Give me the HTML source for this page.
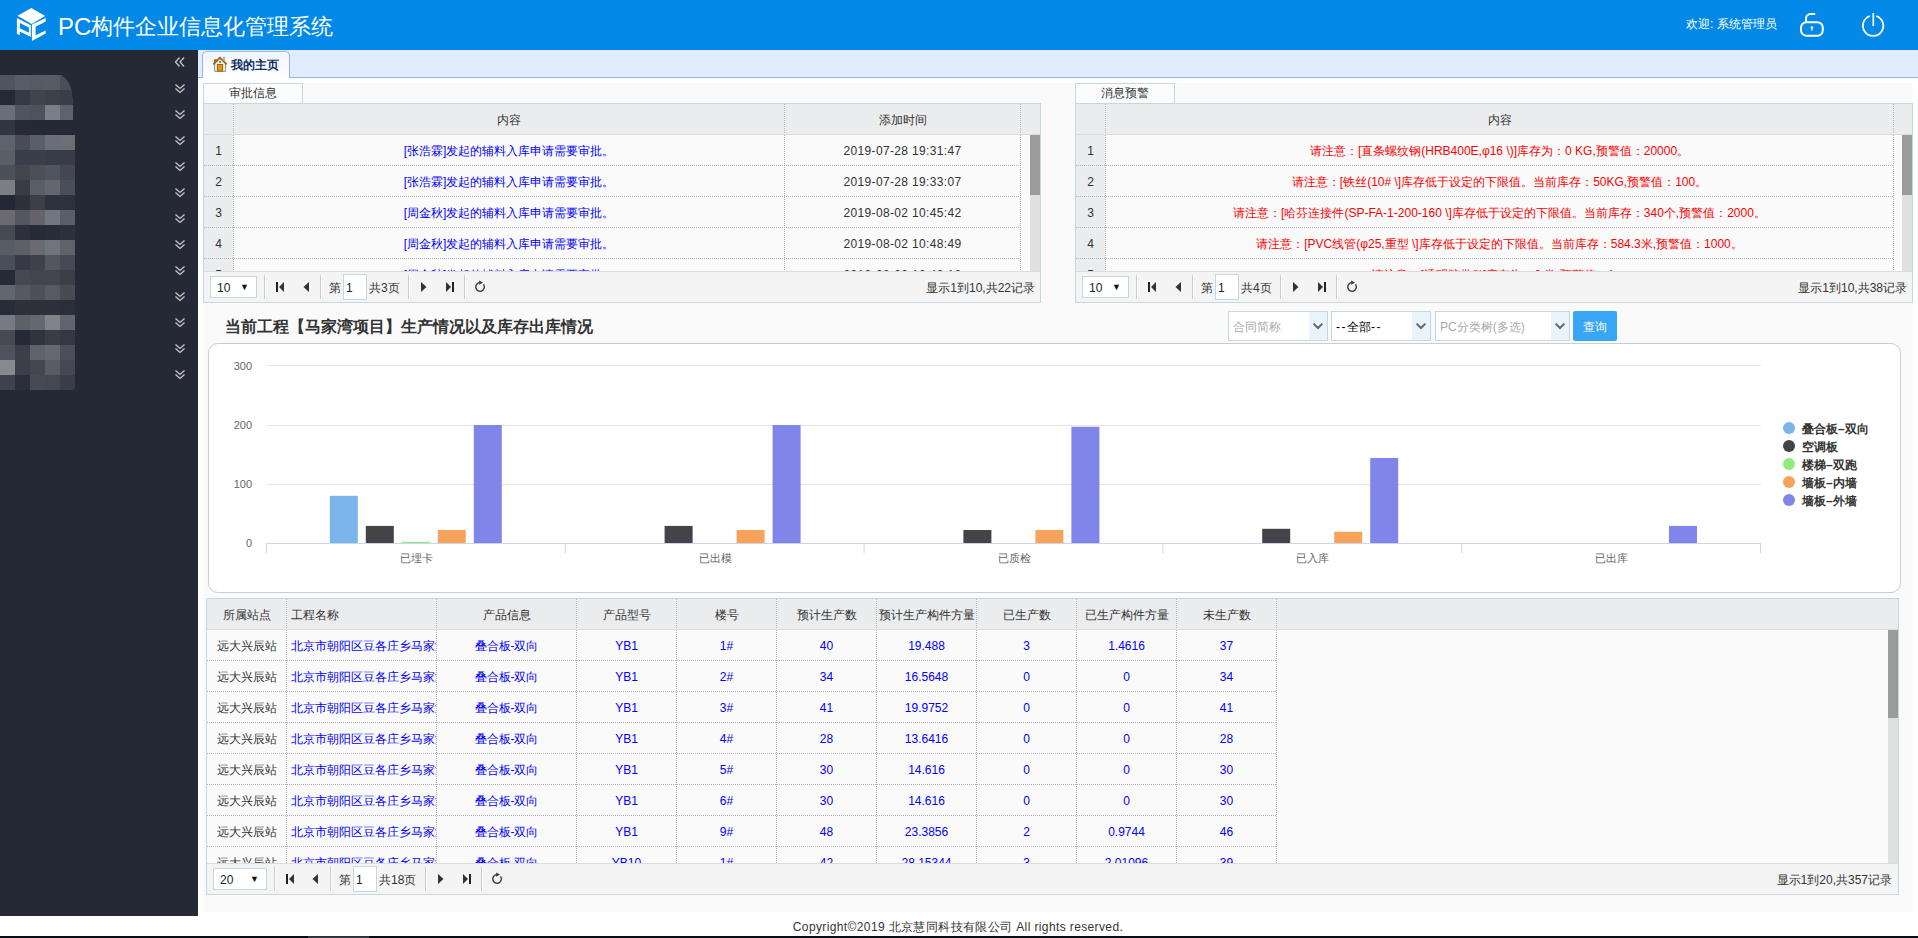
<!DOCTYPE html><html><head><meta charset="utf-8"><title>PC构件企业信息化管理系统</title><style>
*{box-sizing:border-box}
html,body{margin:0;padding:0}
body{width:1918px;height:938px;overflow:hidden;position:relative;background:#fff;font-family:"Liberation Sans", sans-serif;font-size:12px;color:#333}
.a{position:absolute}
.t{position:absolute;white-space:nowrap;line-height:14px}
.c{text-align:center}
</style></head><body>
<div class="a" style="left:0;top:0;width:1918px;height:50px;background:#0289e8"></div>
<svg class="a" style="left:10px;top:0" width="50" height="50" viewBox="10 0 50 50">
<path fill="#fff" d="M31.3,8 L45.2,15.9 L31.6,23.9 L17.5,15.7 Z"/>
<path fill="#fff" fill-rule="evenodd" d="M16.9,17.9 L30.8,25.2 L30.8,37 L19.8,31.4 L19.8,35.2 L16.9,33.8 Z M19.9,22.9 L28.9,27.5 L28.9,32.8 L19.9,28.3 Z"/>
<path fill="#fff" d="M31.9,24.5 L45.7,17.9 L45.7,21.6 L35.6,26.7 L35.6,35.2 L45.7,30.4 L45.7,33.6 L31.9,41 Z"/>
</svg>
<div class="t" style="left:58px;top:13px;font-size:22px;line-height:26px;color:#fff"><span style="font-size:24px;letter-spacing:0px;position:relative;top:1px">PC</span>构件企业信息化管理系统</div>
<div class="t" style="left:1686px;top:17px;color:#fff">欢迎: 系统管理员</div>
<svg class="a" style="left:1796px;top:10px" width="32" height="30" viewBox="1796 10 32 30">
<rect x="1801" y="22.2" width="21.8" height="13.5" rx="5.5" fill="none" stroke="#fff" stroke-width="2"/>
<path d="M1806,22.2 V18.6 a4.6,4.6 0 0 1 4.6,-4.6 H1815.2" fill="none" stroke="#fff" stroke-width="2"/>
<circle cx="1811.9" cy="27.6" r="1.3" fill="#fff"/><rect x="1811.3" y="27.6" width="1.2" height="3.4" fill="#fff" opacity="0.8"/>
</svg>
<svg class="a" style="left:1858px;top:10px" width="30" height="30" viewBox="1858 10 30 30">
<path d="M1870,16 A10.2,10.2 0 1 0 1876.2,16" fill="none" stroke="#fff" stroke-width="1.8"/>
<line x1="1873.3" y1="13" x2="1873.3" y2="26.1" stroke="#fff" stroke-width="1.7"/>
</svg>
<div class="a" style="left:0;top:50px;width:198px;height:866px;background:#242935"></div>
<svg class="a" style="left:170px;top:50px" width="20" height="340" viewBox="170 50 20 340"><path d="M179.5,57.5 L175.5,62 L179.5,66.5 M184,57.5 L180,62 L184,66.5" fill="none" stroke="#c8c8c8" stroke-width="1.3"/><path d="M175.5,84.5 L180,88.5 L184.5,84.5 M175.5,88.5 L180,92.5 L184.5,88.5" fill="none" stroke="#c8c8c8" stroke-width="1.3"/><path d="M175.5,110.5 L180,114.5 L184.5,110.5 M175.5,114.5 L180,118.5 L184.5,114.5" fill="none" stroke="#c8c8c8" stroke-width="1.3"/><path d="M175.5,136.5 L180,140.5 L184.5,136.5 M175.5,140.5 L180,144.5 L184.5,140.5" fill="none" stroke="#c8c8c8" stroke-width="1.3"/><path d="M175.5,162.5 L180,166.5 L184.5,162.5 M175.5,166.5 L180,170.5 L184.5,166.5" fill="none" stroke="#c8c8c8" stroke-width="1.3"/><path d="M175.5,188.5 L180,192.5 L184.5,188.5 M175.5,192.5 L180,196.5 L184.5,192.5" fill="none" stroke="#c8c8c8" stroke-width="1.3"/><path d="M175.5,214.5 L180,218.5 L184.5,214.5 M175.5,218.5 L180,222.5 L184.5,218.5" fill="none" stroke="#c8c8c8" stroke-width="1.3"/><path d="M175.5,240.5 L180,244.5 L184.5,240.5 M175.5,244.5 L180,248.5 L184.5,244.5" fill="none" stroke="#c8c8c8" stroke-width="1.3"/><path d="M175.5,266.5 L180,270.5 L184.5,266.5 M175.5,270.5 L180,274.5 L184.5,270.5" fill="none" stroke="#c8c8c8" stroke-width="1.3"/><path d="M175.5,292.5 L180,296.5 L184.5,292.5 M175.5,296.5 L180,300.5 L184.5,296.5" fill="none" stroke="#c8c8c8" stroke-width="1.3"/><path d="M175.5,318.5 L180,322.5 L184.5,318.5 M175.5,322.5 L180,326.5 L184.5,322.5" fill="none" stroke="#c8c8c8" stroke-width="1.3"/><path d="M175.5,344.5 L180,348.5 L184.5,344.5 M175.5,348.5 L180,352.5 L184.5,348.5" fill="none" stroke="#c8c8c8" stroke-width="1.3"/><path d="M175.5,370.5 L180,374.5 L184.5,370.5 M175.5,374.5 L180,378.5 L184.5,374.5" fill="none" stroke="#c8c8c8" stroke-width="1.3"/></svg>
<div class="a" style="left:0;top:75px;width:73px;height:45px;overflow:hidden;clip-path:polygon(0 0,61px 0,66px 4px,69px 8px,71px 13px,71px 15px,72px 15px,72px 22px,73px 22px,73px 45px,0 45px)">
<div class="a" style="left:0px;top:0px;width:15px;height:15px;background:#50545e"></div>
<div class="a" style="left:15px;top:0px;width:15px;height:15px;background:#585c66"></div>
<div class="a" style="left:30px;top:0px;width:15px;height:15px;background:#565a64"></div>
<div class="a" style="left:45px;top:0px;width:15px;height:15px;background:#575b65"></div>
<div class="a" style="left:60px;top:0px;width:13px;height:15px;background:#4a4e58"></div>
<div class="a" style="left:0px;top:15px;width:15px;height:15px;background:#262a36"></div>
<div class="a" style="left:15px;top:15px;width:15px;height:15px;background:#363a46"></div>
<div class="a" style="left:30px;top:15px;width:15px;height:15px;background:#40444e"></div>
<div class="a" style="left:45px;top:15px;width:15px;height:15px;background:#3c404a"></div>
<div class="a" style="left:60px;top:15px;width:13px;height:15px;background:#3a3e48"></div>
<div class="a" style="left:0px;top:30px;width:15px;height:15px;background:#6a6e78"></div>
<div class="a" style="left:15px;top:30px;width:15px;height:15px;background:#50545e"></div>
<div class="a" style="left:30px;top:30px;width:15px;height:15px;background:#4e525c"></div>
<div class="a" style="left:45px;top:30px;width:15px;height:15px;background:#7a7e88"></div>
<div class="a" style="left:60px;top:30px;width:13px;height:15px;background:#5e626c"></div>
</div>
<div class="a" style="left:0;top:120px;width:75px;height:270px;border-bottom-right-radius:3px;overflow:hidden">
<div class="a" style="left:0px;top:0px;width:15px;height:15px;background:#323644"></div>
<div class="a" style="left:15px;top:0px;width:15px;height:15px;background:#262a36"></div>
<div class="a" style="left:30px;top:0px;width:15px;height:15px;background:#242935"></div>
<div class="a" style="left:45px;top:0px;width:15px;height:15px;background:#242935"></div>
<div class="a" style="left:60px;top:0px;width:15px;height:15px;background:#242935"></div>
<div class="a" style="left:0px;top:15px;width:15px;height:15px;background:#5e626c"></div>
<div class="a" style="left:15px;top:15px;width:15px;height:15px;background:#4a4b55"></div>
<div class="a" style="left:30px;top:15px;width:15px;height:15px;background:#5a5e68"></div>
<div class="a" style="left:45px;top:15px;width:15px;height:15px;background:#6a6e78"></div>
<div class="a" style="left:60px;top:15px;width:15px;height:15px;background:#6c7074"></div>
<div class="a" style="left:0px;top:30px;width:15px;height:15px;background:#5a5e68"></div>
<div class="a" style="left:15px;top:30px;width:15px;height:15px;background:#3a3e4a"></div>
<div class="a" style="left:30px;top:30px;width:15px;height:15px;background:#3a3e4a"></div>
<div class="a" style="left:45px;top:30px;width:15px;height:15px;background:#383c48"></div>
<div class="a" style="left:60px;top:30px;width:15px;height:15px;background:#383c48"></div>
<div class="a" style="left:0px;top:45px;width:15px;height:15px;background:#4c505a"></div>
<div class="a" style="left:15px;top:45px;width:15px;height:15px;background:#44464f"></div>
<div class="a" style="left:30px;top:45px;width:15px;height:15px;background:#4e4e56"></div>
<div class="a" style="left:45px;top:45px;width:15px;height:15px;background:#50545e"></div>
<div class="a" style="left:60px;top:45px;width:15px;height:15px;background:#45464f"></div>
<div class="a" style="left:0px;top:60px;width:15px;height:15px;background:#7d7e84"></div>
<div class="a" style="left:15px;top:60px;width:15px;height:15px;background:#393c47"></div>
<div class="a" style="left:30px;top:60px;width:15px;height:15px;background:#5a5e68"></div>
<div class="a" style="left:45px;top:60px;width:15px;height:15px;background:#626670"></div>
<div class="a" style="left:60px;top:60px;width:15px;height:15px;background:#4a4e58"></div>
<div class="a" style="left:0px;top:75px;width:15px;height:15px;background:#242836"></div>
<div class="a" style="left:15px;top:75px;width:15px;height:15px;background:#2e313c"></div>
<div class="a" style="left:30px;top:75px;width:15px;height:15px;background:#3c3e4a"></div>
<div class="a" style="left:45px;top:75px;width:15px;height:15px;background:#2e323e"></div>
<div class="a" style="left:60px;top:75px;width:15px;height:15px;background:#2e323e"></div>
<div class="a" style="left:0px;top:90px;width:15px;height:15px;background:#6c6a70"></div>
<div class="a" style="left:15px;top:90px;width:15px;height:15px;background:#555660"></div>
<div class="a" style="left:30px;top:90px;width:15px;height:15px;background:#66646a"></div>
<div class="a" style="left:45px;top:90px;width:15px;height:15px;background:#727680"></div>
<div class="a" style="left:60px;top:90px;width:15px;height:15px;background:#5a5e68"></div>
<div class="a" style="left:0px;top:105px;width:15px;height:15px;background:#464a54"></div>
<div class="a" style="left:15px;top:105px;width:15px;height:15px;background:#2c303c"></div>
<div class="a" style="left:30px;top:105px;width:15px;height:15px;background:#262a36"></div>
<div class="a" style="left:45px;top:105px;width:15px;height:15px;background:#282c38"></div>
<div class="a" style="left:60px;top:105px;width:15px;height:15px;background:#2c303a"></div>
<div class="a" style="left:0px;top:120px;width:15px;height:15px;background:#585c66"></div>
<div class="a" style="left:15px;top:120px;width:15px;height:15px;background:#5e6068"></div>
<div class="a" style="left:30px;top:120px;width:15px;height:15px;background:#6a6a70"></div>
<div class="a" style="left:45px;top:120px;width:15px;height:15px;background:#70747c"></div>
<div class="a" style="left:60px;top:120px;width:15px;height:15px;background:#60626a"></div>
<div class="a" style="left:0px;top:135px;width:15px;height:15px;background:#4a4e58"></div>
<div class="a" style="left:15px;top:135px;width:15px;height:15px;background:#363a46"></div>
<div class="a" style="left:30px;top:135px;width:15px;height:15px;background:#3e404a"></div>
<div class="a" style="left:45px;top:135px;width:15px;height:15px;background:#52565e"></div>
<div class="a" style="left:60px;top:135px;width:15px;height:15px;background:#474a54"></div>
<div class="a" style="left:0px;top:150px;width:15px;height:15px;background:#262a36"></div>
<div class="a" style="left:15px;top:150px;width:15px;height:15px;background:#454852"></div>
<div class="a" style="left:30px;top:150px;width:15px;height:15px;background:#42454f"></div>
<div class="a" style="left:45px;top:150px;width:15px;height:15px;background:#42454f"></div>
<div class="a" style="left:60px;top:150px;width:15px;height:15px;background:#3c3e48"></div>
<div class="a" style="left:0px;top:165px;width:15px;height:15px;background:#62666e"></div>
<div class="a" style="left:15px;top:165px;width:15px;height:15px;background:#555a62"></div>
<div class="a" style="left:30px;top:165px;width:15px;height:15px;background:#4e5058"></div>
<div class="a" style="left:45px;top:165px;width:15px;height:15px;background:#565a64"></div>
<div class="a" style="left:60px;top:165px;width:15px;height:15px;background:#4a4a52"></div>
<div class="a" style="left:0px;top:180px;width:15px;height:15px;background:#282c38"></div>
<div class="a" style="left:15px;top:180px;width:15px;height:15px;background:#2e303c"></div>
<div class="a" style="left:30px;top:180px;width:15px;height:15px;background:#2e303c"></div>
<div class="a" style="left:45px;top:180px;width:15px;height:15px;background:#2e303c"></div>
<div class="a" style="left:60px;top:180px;width:15px;height:15px;background:#2a2e3a"></div>
<div class="a" style="left:0px;top:195px;width:15px;height:15px;background:#767a82"></div>
<div class="a" style="left:15px;top:195px;width:15px;height:15px;background:#5c6068"></div>
<div class="a" style="left:30px;top:195px;width:15px;height:15px;background:#646870"></div>
<div class="a" style="left:45px;top:195px;width:15px;height:15px;background:#80848a"></div>
<div class="a" style="left:60px;top:195px;width:15px;height:15px;background:#60646c"></div>
<div class="a" style="left:0px;top:210px;width:15px;height:15px;background:#474a54"></div>
<div class="a" style="left:15px;top:210px;width:15px;height:15px;background:#262a36"></div>
<div class="a" style="left:30px;top:210px;width:15px;height:15px;background:#30343e"></div>
<div class="a" style="left:45px;top:210px;width:15px;height:15px;background:#3a3c48"></div>
<div class="a" style="left:60px;top:210px;width:15px;height:15px;background:#353742"></div>
<div class="a" style="left:0px;top:225px;width:15px;height:15px;background:#4e525c"></div>
<div class="a" style="left:15px;top:225px;width:15px;height:15px;background:#3c3e48"></div>
<div class="a" style="left:30px;top:225px;width:15px;height:15px;background:#5e626c"></div>
<div class="a" style="left:45px;top:225px;width:15px;height:15px;background:#646871"></div>
<div class="a" style="left:60px;top:225px;width:15px;height:15px;background:#4c4f59"></div>
<div class="a" style="left:0px;top:240px;width:15px;height:15px;background:#88898e"></div>
<div class="a" style="left:15px;top:240px;width:15px;height:15px;background:#3c3e4a"></div>
<div class="a" style="left:30px;top:240px;width:15px;height:15px;background:#47464f"></div>
<div class="a" style="left:45px;top:240px;width:15px;height:15px;background:#585c66"></div>
<div class="a" style="left:60px;top:240px;width:15px;height:15px;background:#454852"></div>
<div class="a" style="left:0px;top:255px;width:15px;height:15px;background:#3e424c"></div>
<div class="a" style="left:15px;top:255px;width:15px;height:15px;background:#2a2e3a"></div>
<div class="a" style="left:30px;top:255px;width:15px;height:15px;background:#464a54"></div>
<div class="a" style="left:45px;top:255px;width:15px;height:15px;background:#444852"></div>
<div class="a" style="left:60px;top:255px;width:15px;height:15px;background:#3a3e48"></div>
</div>
<div class="a" style="left:198px;top:50px;width:1720px;height:28px;background:#e0ecff;border-bottom:1px solid #95b8e7"></div>
<div class="a" style="left:202px;top:51px;width:88px;height:27px;border:1px solid #95b8e7;border-bottom:0;border-radius:5px 5px 0 0;background:linear-gradient(#eff5ff,#ffffff)"></div>
<svg class="a" style="left:210px;top:54px" width="20" height="20" viewBox="210 54 20 20">
<path d="M214.6,63.6 V71.4 H225.6 V63.6 L220,58.3 Z" fill="#e6f2dc" stroke="#8a8a8a" stroke-width="0.9"/>
<path d="M213.3,64.4 L220,57.6 L226.7,64.4" fill="none" stroke="#b05a00" stroke-width="1.6"/>
<path d="M213.8,63 L214.3,59.2 L217.8,59.2 Z" fill="#b05a00"/>
<rect x="223.3" y="57.2" width="1.5" height="3.2" fill="#f4f0d8" stroke="#999" stroke-width="0.7"/>
<rect x="217.4" y="64.5" width="5.2" height="6.6" fill="#dc961e" stroke="#b06000" stroke-width="1"/>
<rect x="219.3" y="61.2" width="1.6" height="1.6" fill="#1a47b8"/>
</svg>
<div class="t" style="left:231px;top:58px;font-weight:bold;color:#0e2d5f">我的主页</div>
<div class="a" style="left:203px;top:83px;width:1710px;height:829px;background:#fafafa"></div>
<div class="a" style="left:203px;top:83px;width:100px;height:21px;border:1px solid #c4d8df;border-bottom:0;background:#fcfcfc"></div><div class="t c" style="left:203px;top:86px;width:100px;color:#333">审批信息</div><div class="a" style="left:203px;top:103px;width:838px;height:200px;border:1px solid #c4d8df;background:#fafafa"></div><div class="a" style="left:204px;top:104px;width:836px;height:31px;background:#ebeced;border-bottom:1px solid #dcdcdc"></div><div class="a" style="left:233px;top:104px;width:1px;height:30px;background:repeating-linear-gradient(to bottom,#b4b4b4 0 1px,transparent 1px 2px)"></div><div class="a" style="left:784px;top:104px;width:1px;height:30px;background:repeating-linear-gradient(to bottom,#b4b4b4 0 1px,transparent 1px 2px)"></div><div class="a" style="left:1020px;top:104px;width:1px;height:30px;background:repeating-linear-gradient(to bottom,#b4b4b4 0 1px,transparent 1px 2px)"></div><div class="t c" style="left:234px;top:113px;width:550px;color:#333">内容</div><div class="t c" style="left:785px;top:113px;width:235px;color:#333">添加时间</div><div class="a" style="left:204px;top:135px;width:836px;height:136px;overflow:hidden"><div class="a" style="left:0;top:0;width:29px;height:136px;background:#ebeced"></div><div class="a" style="left:29px;top:0px;width:1px;height:136px;background:repeating-linear-gradient(to bottom,#b4b4b4 0 1px,transparent 1px 2px)"></div><div class="a" style="left:580px;top:0px;width:1px;height:136px;background:repeating-linear-gradient(to bottom,#b4b4b4 0 1px,transparent 1px 2px)"></div><div class="a" style="left:816px;top:0px;width:1px;height:136px;background:repeating-linear-gradient(to bottom,#b4b4b4 0 1px,transparent 1px 2px)"></div><div class="a" style="left:0px;top:30px;width:816px;height:1px;background:repeating-linear-gradient(to right,#b4b4b4 0 1px,transparent 1px 2px)"></div><div class="t c" style="left:0;top:9px;width:29px;color:#333">1</div><div class="t c" style="left:30px;top:9px;width:550px;color:#0000ff">[张浩霖]发起的辅料入库申请需要审批。</div><div class="t c" style="left:581px;top:9px;width:235px;color:#333"><span style="letter-spacing:0.35px">2019-07-28 19:31:47</span></div><div class="a" style="left:0px;top:61px;width:816px;height:1px;background:repeating-linear-gradient(to right,#b4b4b4 0 1px,transparent 1px 2px)"></div><div class="t c" style="left:0;top:40px;width:29px;color:#333">2</div><div class="t c" style="left:30px;top:40px;width:550px;color:#0000ff">[张浩霖]发起的辅料入库申请需要审批。</div><div class="t c" style="left:581px;top:40px;width:235px;color:#333"><span style="letter-spacing:0.35px">2019-07-28 19:33:07</span></div><div class="a" style="left:0px;top:92px;width:816px;height:1px;background:repeating-linear-gradient(to right,#b4b4b4 0 1px,transparent 1px 2px)"></div><div class="t c" style="left:0;top:71px;width:29px;color:#333">3</div><div class="t c" style="left:30px;top:71px;width:550px;color:#0000ff">[周金秋]发起的辅料入库申请需要审批。</div><div class="t c" style="left:581px;top:71px;width:235px;color:#333"><span style="letter-spacing:0.35px">2019-08-02 10:45:42</span></div><div class="a" style="left:0px;top:123px;width:816px;height:1px;background:repeating-linear-gradient(to right,#b4b4b4 0 1px,transparent 1px 2px)"></div><div class="t c" style="left:0;top:102px;width:29px;color:#333">4</div><div class="t c" style="left:30px;top:102px;width:550px;color:#0000ff">[周金秋]发起的辅料入库申请需要审批。</div><div class="t c" style="left:581px;top:102px;width:235px;color:#333"><span style="letter-spacing:0.35px">2019-08-02 10:48:49</span></div><div class="a" style="left:0px;top:154px;width:816px;height:1px;background:repeating-linear-gradient(to right,#b4b4b4 0 1px,transparent 1px 2px)"></div><div class="t c" style="left:0;top:133px;width:29px;color:#333">5</div><div class="t c" style="left:30px;top:133px;width:550px;color:#0000ff">[周金秋]发起的辅料入库申请需要审批。</div><div class="t c" style="left:581px;top:133px;width:235px;color:#333"><span style="letter-spacing:0.35px">2019-08-02 10:49:12</span></div><div class="a" style="left:826px;top:0;width:10px;height:136px;background:#e0e0e0"></div><div class="a" style="left:826px;top:0;width:10px;height:60px;background:#9b9b9b"></div></div><div class="a" style="left:204px;top:271px;width:836px;height:31px;background:#f4f4f4;border-top:1px solid #dcdcdc"></div><div class="a" style="left:210px;top:276px;width:47px;height:22px;border:1px solid #c4d8df;background:#fff"></div><div class="t" style="left:217px;top:281px;color:#222">10</div><div class="t" style="left:240px;top:280px;color:#111;font-size:9px">▼</div><div class="a" style="left:264px;top:275px;width:2px;height:24px;border-left:1px solid #ccc;border-right:1px solid #fff"></div><div class="a" style="left:320px;top:275px;width:2px;height:24px;border-left:1px solid #ccc;border-right:1px solid #fff"></div><div class="a" style="left:408px;top:275px;width:2px;height:24px;border-left:1px solid #ccc;border-right:1px solid #fff"></div><div class="a" style="left:464px;top:275px;width:2px;height:24px;border-left:1px solid #ccc;border-right:1px solid #fff"></div><svg class="a" style="left:275px;top:281px" width="10" height="12" viewBox="0 0 10 12"><rect x="1" y="1" width="2" height="10" fill="#222"/><path d="M9,1 L4,6 L9,11 Z" fill="#333"/></svg><svg class="a" style="left:302px;top:281px" width="8" height="12" viewBox="0 0 8 12"><path d="M7,1 L1.5,6 L7,11 Z" fill="#333"/></svg><div class="t" style="left:329px;top:281px;color:#333">第</div><div class="a" style="left:343px;top:274px;width:24px;height:26px;border:1px solid #c4d8df;background:#fff"></div><div class="t" style="left:346px;top:281px;color:#222">1</div><div class="t" style="left:369px;top:281px;color:#333">共3页</div><svg class="a" style="left:420px;top:281px" width="8" height="12" viewBox="0 0 8 12"><path d="M1,1 L6.5,6 L1,11 Z" fill="#333"/></svg><svg class="a" style="left:445px;top:281px" width="10" height="12" viewBox="0 0 10 12"><rect x="7" y="1" width="2" height="10" fill="#222"/><path d="M1,1 L6,6 L1,11 Z" fill="#333"/></svg><svg class="a" style="left:474px;top:280px" width="12" height="13" viewBox="0 0 12 13"><path d="M9.5,4.3 A4.3,4.3 0 1 1 5.8,2.6" fill="none" stroke="#3a3a3a" stroke-width="1.4"/><path d="M5.1,0.5 L8.9,2.5 L5.3,4.8 Z" fill="#3a3a3a"/></svg><div class="t" style="left:735px;width:300px;text-align:right;top:281px;color:#333">显示1到10,共22记录</div>
<div class="a" style="left:1075px;top:83px;width:100px;height:21px;border:1px solid #c4d8df;border-bottom:0;background:#fcfcfc"></div><div class="t c" style="left:1075px;top:86px;width:100px;color:#333">消息预警</div><div class="a" style="left:1075px;top:103px;width:838px;height:200px;border:1px solid #c4d8df;background:#fafafa"></div><div class="a" style="left:1076px;top:104px;width:836px;height:31px;background:#ebeced;border-bottom:1px solid #dcdcdc"></div><div class="a" style="left:1105px;top:104px;width:1px;height:30px;background:repeating-linear-gradient(to bottom,#b4b4b4 0 1px,transparent 1px 2px)"></div><div class="a" style="left:1893px;top:104px;width:1px;height:30px;background:repeating-linear-gradient(to bottom,#b4b4b4 0 1px,transparent 1px 2px)"></div><div class="t c" style="left:1106px;top:113px;width:787px;color:#333">内容</div><div class="a" style="left:1076px;top:135px;width:836px;height:136px;overflow:hidden"><div class="a" style="left:0;top:0;width:29px;height:136px;background:#ebeced"></div><div class="a" style="left:29px;top:0px;width:1px;height:136px;background:repeating-linear-gradient(to bottom,#b4b4b4 0 1px,transparent 1px 2px)"></div><div class="a" style="left:817px;top:0px;width:1px;height:136px;background:repeating-linear-gradient(to bottom,#b4b4b4 0 1px,transparent 1px 2px)"></div><div class="a" style="left:0px;top:30px;width:817px;height:1px;background:repeating-linear-gradient(to right,#b4b4b4 0 1px,transparent 1px 2px)"></div><div class="t c" style="left:0;top:9px;width:29px;color:#333">1</div><div class="t c" style="left:30px;top:9px;width:787px;color:#ff0000">请注意：[直条螺纹钢(HRB400E,φ16 \)]库存为：0 KG,预警值：20000。</div><div class="a" style="left:0px;top:61px;width:817px;height:1px;background:repeating-linear-gradient(to right,#b4b4b4 0 1px,transparent 1px 2px)"></div><div class="t c" style="left:0;top:40px;width:29px;color:#333">2</div><div class="t c" style="left:30px;top:40px;width:787px;color:#ff0000">请注意：[铁丝(10# \]库存低于设定的下限值。当前库存：50KG,预警值：100。</div><div class="a" style="left:0px;top:92px;width:817px;height:1px;background:repeating-linear-gradient(to right,#b4b4b4 0 1px,transparent 1px 2px)"></div><div class="t c" style="left:0;top:71px;width:29px;color:#333">3</div><div class="t c" style="left:30px;top:71px;width:787px;color:#ff0000">请注意：[哈芬连接件(SP-FA-1-200-160 \]库存低于设定的下限值。当前库存：340个,预警值：2000。</div><div class="a" style="left:0px;top:123px;width:817px;height:1px;background:repeating-linear-gradient(to right,#b4b4b4 0 1px,transparent 1px 2px)"></div><div class="t c" style="left:0;top:102px;width:29px;color:#333">4</div><div class="t c" style="left:30px;top:102px;width:787px;color:#ff0000">请注意：[PVC线管(φ25,重型 \]库存低于设定的下限值。当前库存：584.3米,预警值：1000。</div><div class="a" style="left:0px;top:154px;width:817px;height:1px;background:repeating-linear-gradient(to right,#b4b4b4 0 1px,transparent 1px 2px)"></div><div class="t c" style="left:0;top:133px;width:29px;color:#333">5</div><div class="t c" style="left:30px;top:133px;width:787px;color:#ff0000">请注意：[透明胶带(\)]库存为：0 卷,预警值：1。</div><div class="a" style="left:826px;top:0;width:10px;height:136px;background:#e0e0e0"></div><div class="a" style="left:826px;top:0;width:10px;height:60px;background:#9b9b9b"></div></div><div class="a" style="left:1076px;top:271px;width:836px;height:31px;background:#f4f4f4;border-top:1px solid #dcdcdc"></div><div class="a" style="left:1082px;top:276px;width:47px;height:22px;border:1px solid #c4d8df;background:#fff"></div><div class="t" style="left:1089px;top:281px;color:#222">10</div><div class="t" style="left:1112px;top:280px;color:#111;font-size:9px">▼</div><div class="a" style="left:1136px;top:275px;width:2px;height:24px;border-left:1px solid #ccc;border-right:1px solid #fff"></div><div class="a" style="left:1192px;top:275px;width:2px;height:24px;border-left:1px solid #ccc;border-right:1px solid #fff"></div><div class="a" style="left:1280px;top:275px;width:2px;height:24px;border-left:1px solid #ccc;border-right:1px solid #fff"></div><div class="a" style="left:1336px;top:275px;width:2px;height:24px;border-left:1px solid #ccc;border-right:1px solid #fff"></div><svg class="a" style="left:1147px;top:281px" width="10" height="12" viewBox="0 0 10 12"><rect x="1" y="1" width="2" height="10" fill="#222"/><path d="M9,1 L4,6 L9,11 Z" fill="#333"/></svg><svg class="a" style="left:1174px;top:281px" width="8" height="12" viewBox="0 0 8 12"><path d="M7,1 L1.5,6 L7,11 Z" fill="#333"/></svg><div class="t" style="left:1201px;top:281px;color:#333">第</div><div class="a" style="left:1215px;top:274px;width:24px;height:26px;border:1px solid #c4d8df;background:#fff"></div><div class="t" style="left:1218px;top:281px;color:#222">1</div><div class="t" style="left:1241px;top:281px;color:#333">共4页</div><svg class="a" style="left:1292px;top:281px" width="8" height="12" viewBox="0 0 8 12"><path d="M1,1 L6.5,6 L1,11 Z" fill="#333"/></svg><svg class="a" style="left:1317px;top:281px" width="10" height="12" viewBox="0 0 10 12"><rect x="7" y="1" width="2" height="10" fill="#222"/><path d="M1,1 L6,6 L1,11 Z" fill="#333"/></svg><svg class="a" style="left:1346px;top:280px" width="12" height="13" viewBox="0 0 12 13"><path d="M9.5,4.3 A4.3,4.3 0 1 1 5.8,2.6" fill="none" stroke="#3a3a3a" stroke-width="1.4"/><path d="M5.1,0.5 L8.9,2.5 L5.3,4.8 Z" fill="#3a3a3a"/></svg><div class="t" style="left:1607px;width:300px;text-align:right;top:281px;color:#333">显示1到10,共38记录</div>
<div class="t" style="left:225px;top:318px;font-size:16px;line-height:18px;font-weight:bold;color:#333">当前工程【马家湾项目】生产情况以及库存出库情况</div>
<div class="a" style="left:1228px;top:311px;width:100px;height:30px;border:1px solid #c4d8df;background:#fff"></div><div class="a" style="left:1309px;top:312px;width:18px;height:28px;background:#e8f4fa"></div><svg class="a" style="left:1312px;top:320px" width="12" height="12" viewBox="0 0 12 12"><path d="M1.6,3.6 L6,8 L10.4,3.6" fill="none" stroke="#666" stroke-width="2"/></svg><div class="t" style="left:1233px;top:320px;color:#aaa">合同简称</div>
<div class="a" style="left:1331px;top:311px;width:100px;height:30px;border:1px solid #c4d8df;background:#fff"></div><div class="a" style="left:1412px;top:312px;width:18px;height:28px;background:#e8f4fa"></div><svg class="a" style="left:1415px;top:320px" width="12" height="12" viewBox="0 0 12 12"><path d="M1.6,3.6 L6,8 L10.4,3.6" fill="none" stroke="#666" stroke-width="2"/></svg><div class="t" style="left:1336px;top:320px;color:#000"><span style="letter-spacing:1.5px">--</span>全部<span style="letter-spacing:1.5px">--</span></div>
<div class="a" style="left:1435px;top:311px;width:135px;height:30px;border:1px solid #c4d8df;background:#fff"></div><div class="a" style="left:1551px;top:312px;width:18px;height:28px;background:#e8f4fa"></div><svg class="a" style="left:1554px;top:320px" width="12" height="12" viewBox="0 0 12 12"><path d="M1.6,3.6 L6,8 L10.4,3.6" fill="none" stroke="#666" stroke-width="2"/></svg><div class="t" style="left:1440px;top:320px;color:#aaa">PC分类树(多选)</div>
<div class="a" style="left:1573px;top:311px;width:44px;height:30px;background:#38a5f5;border-radius:2px"></div>
<div class="t c" style="left:1573px;top:320px;width:44px;color:#fff">查询</div>
<div class="a" style="left:208px;top:343px;width:1693px;height:250px;border:1px solid #cccccc;border-radius:10px;background:#fff"></div>
<svg class="a" style="left:208px;top:343px" width="1693" height="250" viewBox="208 343 1693 250"><line x1="267" y1="365.5" x2="1761" y2="365.5" stroke="#e6e6e6" stroke-width="1"/><line x1="267" y1="425.5" x2="1761" y2="425.5" stroke="#e6e6e6" stroke-width="1"/><line x1="267" y1="484.5" x2="1761" y2="484.5" stroke="#e6e6e6" stroke-width="1"/><line x1="267" y1="543.5" x2="1761" y2="543.5" stroke="#ccd6eb" stroke-width="1"/><line x1="266.5" y1="543" x2="266.5" y2="553" stroke="#ccd6eb" stroke-width="1"/><line x1="565.3" y1="543" x2="565.3" y2="553" stroke="#ccd6eb" stroke-width="1"/><line x1="864.1" y1="543" x2="864.1" y2="553" stroke="#ccd6eb" stroke-width="1"/><line x1="1162.9" y1="543" x2="1162.9" y2="553" stroke="#ccd6eb" stroke-width="1"/><line x1="1461.7" y1="543" x2="1461.7" y2="553" stroke="#ccd6eb" stroke-width="1"/><line x1="1760.5" y1="543" x2="1760.5" y2="553" stroke="#ccd6eb" stroke-width="1"/></svg>
<div class="t" style="left:200px;width:52px;text-align:right;top:359px;font-size:11px;color:#666">300</div>
<div class="t" style="left:200px;width:52px;text-align:right;top:418px;font-size:11px;color:#666">200</div>
<div class="t" style="left:200px;width:52px;text-align:right;top:477px;font-size:11px;color:#666">100</div>
<div class="t" style="left:200px;width:52px;text-align:right;top:536px;font-size:11px;color:#666">0</div>
<div class="t c" style="left:366.4px;width:100px;top:551px;font-size:11px;color:#666">已埋卡</div>
<div class="t c" style="left:665.2px;width:100px;top:551px;font-size:11px;color:#666">已出模</div>
<div class="t c" style="left:964.0px;width:100px;top:551px;font-size:11px;color:#666">已质检</div>
<div class="t c" style="left:1262.8px;width:100px;top:551px;font-size:11px;color:#666">已入库</div>
<div class="t c" style="left:1561.6px;width:100px;top:551px;font-size:11px;color:#666">已出库</div>
<svg class="a" style="left:208px;top:343px" width="1693" height="250" viewBox="208 343 1693 250"><rect x="329.8" y="495.8" width="28" height="47.2" fill="#7cb5ec"/><rect x="365.8" y="525.9" width="28" height="17.1" fill="#434348"/><rect x="401.8" y="541.8" width="28" height="1.2" fill="#90ed7d"/><rect x="437.8" y="530.0" width="28" height="13.0" fill="#f7a35c"/><rect x="473.8" y="425.0" width="28" height="118.0" fill="#8085e9"/><rect x="664.6" y="525.9" width="28" height="17.1" fill="#434348"/><rect x="736.6" y="530.0" width="28" height="13.0" fill="#f7a35c"/><rect x="772.6" y="425.0" width="28" height="118.0" fill="#8085e9"/><rect x="963.4" y="530.0" width="28" height="13.0" fill="#434348"/><rect x="1035.4" y="530.0" width="28" height="13.0" fill="#f7a35c"/><rect x="1071.4" y="426.8" width="28" height="116.2" fill="#8085e9"/><rect x="1262.2" y="528.8" width="28" height="14.2" fill="#434348"/><rect x="1334.2" y="531.8" width="28" height="11.2" fill="#f7a35c"/><rect x="1370.2" y="458.0" width="28" height="85.0" fill="#8085e9"/><rect x="1669.0" y="525.9" width="28" height="17.1" fill="#8085e9"/></svg>
<div class="a" style="left:1783px;top:422px;width:12px;height:12px;border-radius:6px;background:#7cb5ec"></div>
<div class="t" style="left:1802px;top:422px;font-weight:bold;color:#333">叠合板–双向</div>
<div class="a" style="left:1783px;top:440px;width:12px;height:12px;border-radius:6px;background:#434348"></div>
<div class="t" style="left:1802px;top:440px;font-weight:bold;color:#333">空调板</div>
<div class="a" style="left:1783px;top:458px;width:12px;height:12px;border-radius:6px;background:#90ed7d"></div>
<div class="t" style="left:1802px;top:458px;font-weight:bold;color:#333">楼梯–双跑</div>
<div class="a" style="left:1783px;top:476px;width:12px;height:12px;border-radius:6px;background:#f7a35c"></div>
<div class="t" style="left:1802px;top:476px;font-weight:bold;color:#333">墙板–内墙</div>
<div class="a" style="left:1783px;top:494px;width:12px;height:12px;border-radius:6px;background:#8085e9"></div>
<div class="t" style="left:1802px;top:494px;font-weight:bold;color:#333">墙板–外墙</div>
<div class="a" style="left:206px;top:598px;width:1693px;height:297px;border:1px solid #c4d8df;background:#fafafa"></div>
<div class="a" style="left:207px;top:599px;width:1691px;height:31px;background:#ebeced;border-bottom:1px solid #dcdcdc"></div>
<div class="a" style="left:286px;top:599px;width:1px;height:30px;background:repeating-linear-gradient(to bottom,#b4b4b4 0 1px,transparent 1px 2px)"></div>
<div class="a" style="left:436px;top:599px;width:1px;height:30px;background:repeating-linear-gradient(to bottom,#b4b4b4 0 1px,transparent 1px 2px)"></div>
<div class="a" style="left:576px;top:599px;width:1px;height:30px;background:repeating-linear-gradient(to bottom,#b4b4b4 0 1px,transparent 1px 2px)"></div>
<div class="a" style="left:676px;top:599px;width:1px;height:30px;background:repeating-linear-gradient(to bottom,#b4b4b4 0 1px,transparent 1px 2px)"></div>
<div class="a" style="left:776px;top:599px;width:1px;height:30px;background:repeating-linear-gradient(to bottom,#b4b4b4 0 1px,transparent 1px 2px)"></div>
<div class="a" style="left:876px;top:599px;width:1px;height:30px;background:repeating-linear-gradient(to bottom,#b4b4b4 0 1px,transparent 1px 2px)"></div>
<div class="a" style="left:976px;top:599px;width:1px;height:30px;background:repeating-linear-gradient(to bottom,#b4b4b4 0 1px,transparent 1px 2px)"></div>
<div class="a" style="left:1076px;top:599px;width:1px;height:30px;background:repeating-linear-gradient(to bottom,#b4b4b4 0 1px,transparent 1px 2px)"></div>
<div class="a" style="left:1176px;top:599px;width:1px;height:30px;background:repeating-linear-gradient(to bottom,#b4b4b4 0 1px,transparent 1px 2px)"></div>
<div class="a" style="left:1276px;top:599px;width:1px;height:30px;background:repeating-linear-gradient(to bottom,#b4b4b4 0 1px,transparent 1px 2px)"></div>
<div class="t c" style="left:207px;top:608px;width:79px;color:#333">所属站点</div>
<div class="t" style="left:291px;top:608px;color:#333">工程名称</div>
<div class="t c" style="left:437px;top:608px;width:139px;color:#333">产品信息</div>
<div class="t c" style="left:577px;top:608px;width:99px;color:#333">产品型号</div>
<div class="t c" style="left:677px;top:608px;width:99px;color:#333">楼号</div>
<div class="t c" style="left:777px;top:608px;width:99px;color:#333">预计生产数</div>
<div class="t c" style="left:877px;top:608px;width:99px;color:#333">预计生产构件方量</div>
<div class="t c" style="left:977px;top:608px;width:99px;color:#333">已生产数</div>
<div class="t c" style="left:1077px;top:608px;width:99px;color:#333">已生产构件方量</div>
<div class="t c" style="left:1177px;top:608px;width:99px;color:#333">未生产数</div>
<div class="a" style="left:207px;top:630px;width:1691px;height:233px;overflow:hidden">
<div class="a" style="left:79px;top:0px;width:1px;height:233px;background:repeating-linear-gradient(to bottom,#b4b4b4 0 1px,transparent 1px 2px)"></div>
<div class="a" style="left:229px;top:0px;width:1px;height:233px;background:repeating-linear-gradient(to bottom,#b4b4b4 0 1px,transparent 1px 2px)"></div>
<div class="a" style="left:369px;top:0px;width:1px;height:233px;background:repeating-linear-gradient(to bottom,#b4b4b4 0 1px,transparent 1px 2px)"></div>
<div class="a" style="left:469px;top:0px;width:1px;height:233px;background:repeating-linear-gradient(to bottom,#b4b4b4 0 1px,transparent 1px 2px)"></div>
<div class="a" style="left:569px;top:0px;width:1px;height:233px;background:repeating-linear-gradient(to bottom,#b4b4b4 0 1px,transparent 1px 2px)"></div>
<div class="a" style="left:669px;top:0px;width:1px;height:233px;background:repeating-linear-gradient(to bottom,#b4b4b4 0 1px,transparent 1px 2px)"></div>
<div class="a" style="left:769px;top:0px;width:1px;height:233px;background:repeating-linear-gradient(to bottom,#b4b4b4 0 1px,transparent 1px 2px)"></div>
<div class="a" style="left:869px;top:0px;width:1px;height:233px;background:repeating-linear-gradient(to bottom,#b4b4b4 0 1px,transparent 1px 2px)"></div>
<div class="a" style="left:969px;top:0px;width:1px;height:233px;background:repeating-linear-gradient(to bottom,#b4b4b4 0 1px,transparent 1px 2px)"></div>
<div class="a" style="left:1069px;top:0px;width:1px;height:233px;background:repeating-linear-gradient(to bottom,#b4b4b4 0 1px,transparent 1px 2px)"></div>
<div class="a" style="left:0px;top:30px;width:1069px;height:1px;background:repeating-linear-gradient(to right,#b4b4b4 0 1px,transparent 1px 2px)"></div>
<div class="t c" style="left:0px;top:9px;width:79px;color:#333">远大兴辰站</div>
<div class="t" style="left:84px;top:9px;width:145px;overflow:hidden;color:#0000ff">北京市朝阳区豆各庄乡马家湾项目</div>
<div class="t c" style="left:230px;top:9px;width:139px;color:#0000ff">叠合板-双向</div>
<div class="t c" style="left:370px;top:9px;width:99px;color:#0000ff">YB1</div>
<div class="t c" style="left:470px;top:9px;width:99px;color:#0000ff">1#</div>
<div class="t c" style="left:570px;top:9px;width:99px;color:#0000ff">40</div>
<div class="t c" style="left:670px;top:9px;width:99px;color:#0000ff">19.488</div>
<div class="t c" style="left:770px;top:9px;width:99px;color:#0000ff">3</div>
<div class="t c" style="left:870px;top:9px;width:99px;color:#0000ff">1.4616</div>
<div class="t c" style="left:970px;top:9px;width:99px;color:#0000ff">37</div>
<div class="a" style="left:0px;top:61px;width:1069px;height:1px;background:repeating-linear-gradient(to right,#b4b4b4 0 1px,transparent 1px 2px)"></div>
<div class="t c" style="left:0px;top:40px;width:79px;color:#333">远大兴辰站</div>
<div class="t" style="left:84px;top:40px;width:145px;overflow:hidden;color:#0000ff">北京市朝阳区豆各庄乡马家湾项目</div>
<div class="t c" style="left:230px;top:40px;width:139px;color:#0000ff">叠合板-双向</div>
<div class="t c" style="left:370px;top:40px;width:99px;color:#0000ff">YB1</div>
<div class="t c" style="left:470px;top:40px;width:99px;color:#0000ff">2#</div>
<div class="t c" style="left:570px;top:40px;width:99px;color:#0000ff">34</div>
<div class="t c" style="left:670px;top:40px;width:99px;color:#0000ff">16.5648</div>
<div class="t c" style="left:770px;top:40px;width:99px;color:#0000ff">0</div>
<div class="t c" style="left:870px;top:40px;width:99px;color:#0000ff">0</div>
<div class="t c" style="left:970px;top:40px;width:99px;color:#0000ff">34</div>
<div class="a" style="left:0px;top:92px;width:1069px;height:1px;background:repeating-linear-gradient(to right,#b4b4b4 0 1px,transparent 1px 2px)"></div>
<div class="t c" style="left:0px;top:71px;width:79px;color:#333">远大兴辰站</div>
<div class="t" style="left:84px;top:71px;width:145px;overflow:hidden;color:#0000ff">北京市朝阳区豆各庄乡马家湾项目</div>
<div class="t c" style="left:230px;top:71px;width:139px;color:#0000ff">叠合板-双向</div>
<div class="t c" style="left:370px;top:71px;width:99px;color:#0000ff">YB1</div>
<div class="t c" style="left:470px;top:71px;width:99px;color:#0000ff">3#</div>
<div class="t c" style="left:570px;top:71px;width:99px;color:#0000ff">41</div>
<div class="t c" style="left:670px;top:71px;width:99px;color:#0000ff">19.9752</div>
<div class="t c" style="left:770px;top:71px;width:99px;color:#0000ff">0</div>
<div class="t c" style="left:870px;top:71px;width:99px;color:#0000ff">0</div>
<div class="t c" style="left:970px;top:71px;width:99px;color:#0000ff">41</div>
<div class="a" style="left:0px;top:123px;width:1069px;height:1px;background:repeating-linear-gradient(to right,#b4b4b4 0 1px,transparent 1px 2px)"></div>
<div class="t c" style="left:0px;top:102px;width:79px;color:#333">远大兴辰站</div>
<div class="t" style="left:84px;top:102px;width:145px;overflow:hidden;color:#0000ff">北京市朝阳区豆各庄乡马家湾项目</div>
<div class="t c" style="left:230px;top:102px;width:139px;color:#0000ff">叠合板-双向</div>
<div class="t c" style="left:370px;top:102px;width:99px;color:#0000ff">YB1</div>
<div class="t c" style="left:470px;top:102px;width:99px;color:#0000ff">4#</div>
<div class="t c" style="left:570px;top:102px;width:99px;color:#0000ff">28</div>
<div class="t c" style="left:670px;top:102px;width:99px;color:#0000ff">13.6416</div>
<div class="t c" style="left:770px;top:102px;width:99px;color:#0000ff">0</div>
<div class="t c" style="left:870px;top:102px;width:99px;color:#0000ff">0</div>
<div class="t c" style="left:970px;top:102px;width:99px;color:#0000ff">28</div>
<div class="a" style="left:0px;top:154px;width:1069px;height:1px;background:repeating-linear-gradient(to right,#b4b4b4 0 1px,transparent 1px 2px)"></div>
<div class="t c" style="left:0px;top:133px;width:79px;color:#333">远大兴辰站</div>
<div class="t" style="left:84px;top:133px;width:145px;overflow:hidden;color:#0000ff">北京市朝阳区豆各庄乡马家湾项目</div>
<div class="t c" style="left:230px;top:133px;width:139px;color:#0000ff">叠合板-双向</div>
<div class="t c" style="left:370px;top:133px;width:99px;color:#0000ff">YB1</div>
<div class="t c" style="left:470px;top:133px;width:99px;color:#0000ff">5#</div>
<div class="t c" style="left:570px;top:133px;width:99px;color:#0000ff">30</div>
<div class="t c" style="left:670px;top:133px;width:99px;color:#0000ff">14.616</div>
<div class="t c" style="left:770px;top:133px;width:99px;color:#0000ff">0</div>
<div class="t c" style="left:870px;top:133px;width:99px;color:#0000ff">0</div>
<div class="t c" style="left:970px;top:133px;width:99px;color:#0000ff">30</div>
<div class="a" style="left:0px;top:185px;width:1069px;height:1px;background:repeating-linear-gradient(to right,#b4b4b4 0 1px,transparent 1px 2px)"></div>
<div class="t c" style="left:0px;top:164px;width:79px;color:#333">远大兴辰站</div>
<div class="t" style="left:84px;top:164px;width:145px;overflow:hidden;color:#0000ff">北京市朝阳区豆各庄乡马家湾项目</div>
<div class="t c" style="left:230px;top:164px;width:139px;color:#0000ff">叠合板-双向</div>
<div class="t c" style="left:370px;top:164px;width:99px;color:#0000ff">YB1</div>
<div class="t c" style="left:470px;top:164px;width:99px;color:#0000ff">6#</div>
<div class="t c" style="left:570px;top:164px;width:99px;color:#0000ff">30</div>
<div class="t c" style="left:670px;top:164px;width:99px;color:#0000ff">14.616</div>
<div class="t c" style="left:770px;top:164px;width:99px;color:#0000ff">0</div>
<div class="t c" style="left:870px;top:164px;width:99px;color:#0000ff">0</div>
<div class="t c" style="left:970px;top:164px;width:99px;color:#0000ff">30</div>
<div class="a" style="left:0px;top:216px;width:1069px;height:1px;background:repeating-linear-gradient(to right,#b4b4b4 0 1px,transparent 1px 2px)"></div>
<div class="t c" style="left:0px;top:195px;width:79px;color:#333">远大兴辰站</div>
<div class="t" style="left:84px;top:195px;width:145px;overflow:hidden;color:#0000ff">北京市朝阳区豆各庄乡马家湾项目</div>
<div class="t c" style="left:230px;top:195px;width:139px;color:#0000ff">叠合板-双向</div>
<div class="t c" style="left:370px;top:195px;width:99px;color:#0000ff">YB1</div>
<div class="t c" style="left:470px;top:195px;width:99px;color:#0000ff">9#</div>
<div class="t c" style="left:570px;top:195px;width:99px;color:#0000ff">48</div>
<div class="t c" style="left:670px;top:195px;width:99px;color:#0000ff">23.3856</div>
<div class="t c" style="left:770px;top:195px;width:99px;color:#0000ff">2</div>
<div class="t c" style="left:870px;top:195px;width:99px;color:#0000ff">0.9744</div>
<div class="t c" style="left:970px;top:195px;width:99px;color:#0000ff">46</div>
<div class="a" style="left:0px;top:247px;width:1069px;height:1px;background:repeating-linear-gradient(to right,#b4b4b4 0 1px,transparent 1px 2px)"></div>
<div class="t c" style="left:0px;top:226px;width:79px;color:#333">远大兴辰站</div>
<div class="t" style="left:84px;top:226px;width:145px;overflow:hidden;color:#0000ff">北京市朝阳区豆各庄乡马家湾项目</div>
<div class="t c" style="left:230px;top:226px;width:139px;color:#0000ff">叠合板-双向</div>
<div class="t c" style="left:370px;top:226px;width:99px;color:#0000ff">YB10</div>
<div class="t c" style="left:470px;top:226px;width:99px;color:#0000ff">1#</div>
<div class="t c" style="left:570px;top:226px;width:99px;color:#0000ff">42</div>
<div class="t c" style="left:670px;top:226px;width:99px;color:#0000ff">28.15344</div>
<div class="t c" style="left:770px;top:226px;width:99px;color:#0000ff">3</div>
<div class="t c" style="left:870px;top:226px;width:99px;color:#0000ff">2.01096</div>
<div class="t c" style="left:970px;top:226px;width:99px;color:#0000ff">39</div>
<div class="a" style="left:1681px;top:0;width:10px;height:233px;background:#e0e0e0"></div>
<div class="a" style="left:1681px;top:0;width:10px;height:88px;background:#9b9b9b"></div>
</div>
<div class="a" style="left:207px;top:863px;width:1691px;height:31px;background:#f4f4f4;border-top:1px solid #dcdcdc"></div>
<div class="a" style="left:213px;top:868px;width:54px;height:22px;border:1px solid #c4d8df;background:#fff"></div><div class="t" style="left:220px;top:873px;color:#222">20</div><div class="t" style="left:250px;top:872px;color:#111;font-size:9px">▼</div><div class="a" style="left:274px;top:867px;width:2px;height:24px;border-left:1px solid #ccc;border-right:1px solid #fff"></div><div class="a" style="left:330px;top:867px;width:2px;height:24px;border-left:1px solid #ccc;border-right:1px solid #fff"></div><div class="a" style="left:425px;top:867px;width:2px;height:24px;border-left:1px solid #ccc;border-right:1px solid #fff"></div><div class="a" style="left:481px;top:867px;width:2px;height:24px;border-left:1px solid #ccc;border-right:1px solid #fff"></div><svg class="a" style="left:285px;top:873px" width="10" height="12" viewBox="0 0 10 12"><rect x="1" y="1" width="2" height="10" fill="#222"/><path d="M9,1 L4,6 L9,11 Z" fill="#333"/></svg><svg class="a" style="left:311px;top:873px" width="8" height="12" viewBox="0 0 8 12"><path d="M7,1 L1.5,6 L7,11 Z" fill="#333"/></svg><div class="t" style="left:339px;top:873px;color:#333">第</div><div class="a" style="left:353px;top:866px;width:24px;height:26px;border:1px solid #c4d8df;background:#fff"></div><div class="t" style="left:356px;top:873px;color:#222">1</div><div class="t" style="left:379px;top:873px;color:#333">共18页</div><svg class="a" style="left:437px;top:873px" width="8" height="12" viewBox="0 0 8 12"><path d="M1,1 L6.5,6 L1,11 Z" fill="#333"/></svg><svg class="a" style="left:462px;top:873px" width="10" height="12" viewBox="0 0 10 12"><rect x="7" y="1" width="2" height="10" fill="#222"/><path d="M1,1 L6,6 L1,11 Z" fill="#333"/></svg><svg class="a" style="left:491px;top:872px" width="12" height="13" viewBox="0 0 12 13"><path d="M9.5,4.3 A4.3,4.3 0 1 1 5.8,2.6" fill="none" stroke="#3a3a3a" stroke-width="1.4"/><path d="M5.1,0.5 L8.9,2.5 L5.3,4.8 Z" fill="#3a3a3a"/></svg><div class="t" style="left:1592px;width:300px;text-align:right;top:873px;color:#333">显示1到20,共357记录</div>
<div class="t c" style="left:700px;width:516px;top:920px;color:#333;letter-spacing:0.38px">Copyright©2019 北京慧同科技有限公司 All rights reserved.</div>
<div class="a" style="left:0;top:936px;width:1918px;height:2px;background:#070c19"></div>
<div class="a" style="left:308px;top:936px;width:61px;height:1px;background:#2b2f3b"></div>
<div class="a" style="left:308px;top:937px;width:61px;height:1px;background:#393d49"></div>
</body></html>
